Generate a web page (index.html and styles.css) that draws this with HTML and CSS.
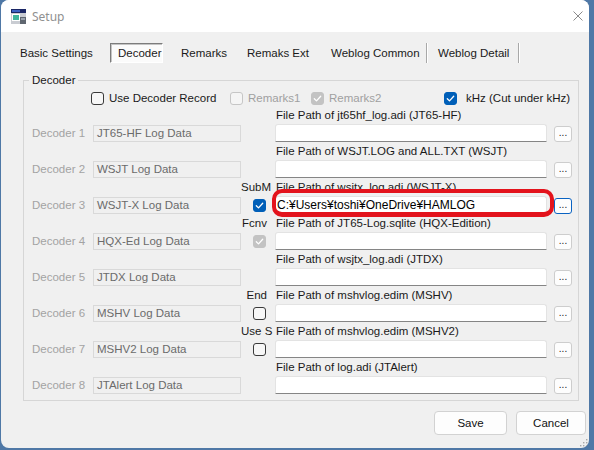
FILE: index.html
```html
<!DOCTYPE html>
<html>
<head>
<meta charset="utf-8">
<link rel="stylesheet" href="styles.css">
</head>
<body>
<div class="window">
  <div class="titlebar">
    <svg class="appicon" viewBox="0 0 15 15">
      <rect x="0" y="0" width="15" height="15" fill="#c9ccd2"/>
      <rect x="0" y="0" width="15" height="4" fill="#1b2766"/>
      <rect x="1" y="1" width="8" height="2" fill="#3b62c4"/>
      <rect x="1" y="5" width="8" height="7" fill="#ffffff"/>
      <rect x="2" y="6" width="6" height="5" fill="#3fb59c"/>
      <rect x="9" y="8" width="6" height="7" fill="#5f6670"/>
      <rect x="10" y="9" width="4" height="2" fill="#9aa2ad"/>
    </svg>
    <span class="title">Setup</span>
    <svg class="close" viewBox="0 0 10 10"><path d="M0.5 0.5 L9.5 9.5 M9.5 0.5 L0.5 9.5" stroke="#8a8a8a" stroke-width="1" fill="none"/></svg>
  </div>

  <div class="tabs">
    <span class="tab t1">Basic Settings</span>
    <span class="tab t2">Decoder</span>
    <span class="tab t3">Remarks</span>
    <span class="tab t4">Remaks Ext</span>
    <span class="tab t5">Weblog Common</span>
    <span class="sep"></span>
    <span class="tab t6">Weblog Detail</span>
    <span class="sep"></span>
  </div>

  <fieldset class="group">
    <legend>Decoder</legend>
    <div class="opts">
      <label class="opt o1"><span class="cb"></span>Use Decoder Record</label>
      <label class="opt o2 disabled"><span class="cb cb-dis"></span>Remarks1</label>
      <label class="opt o3 disabled"><span class="cb cb-dischk"><svg viewBox="0 0 13 13"><polyline points="3.3,6.7 5.5,8.9 9.7,4.3"/></svg></span>Remarks2</label>
      <label class="opt o4"><span class="cb cb-chk"><svg viewBox="0 0 13 13"><polyline points="3.3,6.7 5.5,8.9 9.7,4.3"/></svg></span>kHz (Cut under kHz)</label>
    </div>

    <div class="rows">
      <div class="row">
        <span class="flabel">File Path of jt65hf_log.adi (JT65-HF)</span>
        <span class="dname">Decoder 1</span>
        <span class="dbox">JT65-HF Log Data</span>
        <span class="path"></span>
        <span class="browse">...</span>
      </div>
      <div class="row">
        <span class="flabel">File Path of WSJT.LOG and ALL.TXT (WSJT)</span>
        <span class="dname">Decoder 2</span>
        <span class="dbox">WSJT Log Data</span>
        <span class="path"></span>
        <span class="browse">...</span>
      </div>
      <div class="row">
        <span class="mlabel">SubM</span>
        <span class="flabel">File Path of wsjtx_log.adi (WSJT-X)</span>
        <span class="dname">Decoder 3</span>
        <span class="dbox">WSJT-X Log Data</span>
        <span class="mcheck cb cb-chk"><svg viewBox="0 0 13 13"><polyline points="3.3,6.7 5.5,8.9 9.7,4.3"/></svg></span>
        <span class="path filled">C:¥Users¥toshi¥OneDrive¥HAMLOG</span>
        <span class="browse focus">...</span>
      </div>
      <div class="row">
        <span class="mlabel">Fcnv</span>
        <span class="flabel">File Path of JT65-Log.sqlite (HQX-Edition)</span>
        <span class="dname">Decoder 4</span>
        <span class="dbox">HQX-Ed Log Data</span>
        <span class="mcheck cb cb-dischk"><svg viewBox="0 0 13 13"><polyline points="3.3,6.7 5.5,8.9 9.7,4.3"/></svg></span>
        <span class="path"></span>
        <span class="browse">...</span>
      </div>
      <div class="row">
        <span class="flabel">File Path of wsjtx_log.adi (JTDX)</span>
        <span class="dname">Decoder 5</span>
        <span class="dbox">JTDX Log Data</span>
        <span class="path"></span>
        <span class="browse">...</span>
      </div>
      <div class="row">
        <span class="mlabel">End</span>
        <span class="flabel">File Path of mshvlog.edim (MSHV)</span>
        <span class="dname">Decoder 6</span>
        <span class="dbox">MSHV Log Data</span>
        <span class="mcheck cb"></span>
        <span class="path"></span>
        <span class="browse">...</span>
      </div>
      <div class="row">
        <span class="mlabel">Use S</span>
        <span class="flabel">File Path of mshvlog.edim (MSHV2)</span>
        <span class="dname">Decoder 7</span>
        <span class="dbox">MSHV2 Log Data</span>
        <span class="mcheck cb"></span>
        <span class="path"></span>
        <span class="browse">...</span>
      </div>
      <div class="row">
        <span class="flabel">File Path of log.adi (JTAlert)</span>
        <span class="dname">Decoder 8</span>
        <span class="dbox">JTAlert Log Data</span>
        <span class="path"></span>
        <span class="browse">...</span>
      </div>
      <div class="highlight"></div>
    </div>
  </fieldset>

  <div class="footer">
    <button class="btn save">Save</button>
    <button class="btn cancel">Cancel</button>
  </div>

  <svg class="grip" viewBox="0 0 8 8">
    <rect x="6" y="0" width="1.4" height="1.4" fill="#a8a8a8"/>
    <rect x="3" y="3" width="1.4" height="1.4" fill="#a8a8a8"/>
    <rect x="6" y="3" width="1.4" height="1.4" fill="#a8a8a8"/>
    <rect x="0" y="6" width="1.4" height="1.4" fill="#a8a8a8"/>
    <rect x="3" y="6" width="1.4" height="1.4" fill="#a8a8a8"/>
    <rect x="6" y="6" width="1.4" height="1.4" fill="#a8a8a8"/>
  </svg>
</div>
</body>
</html>
```

FILE: styles.css
```css
* { box-sizing: border-box; }

body {
  margin: 0;
  background: #4f78a6;
  font-family: "Liberation Sans", Arial, sans-serif;
  font-size: 11.5px;
  color: #1a1a1a;
}

.window {
  margin-left: 1px;
  width: 588px;
  height: 448px;
  background: #f0f0f0;
  border-radius: 8px;
  overflow: hidden;
  position: relative;
  display: flex;
  flex-direction: column;
}

.titlebar {
  flex: none;
  height: 32px;
  background: #ffffff;
  display: flex;
  align-items: center;
  padding-left: 10px;
}

.appicon { width: 15px; height: 15px; flex: none; }

.title {
  margin-left: 6px;
  color: #909090;
  font-family: "Noto Sans", sans-serif;
  font-size: 12px;
}

.close {
  width: 10px;
  height: 10px;
  margin-left: auto;
  margin-right: 6px;
}

.tabs {
  flex: none;
  display: flex;
  align-items: stretch;
  height: 20px;
  margin-top: 11px;
  padding-left: 19px;
}

.tab {
  display: flex;
  align-items: center;
  line-height: 14px;
  white-space: nowrap;
}

.t1 { width: 90px; }
.t2 {
  width: 53px;
  margin-right: 18px;
  padding-left: 7px;
  border: 1px solid;
  border-color: #7c7c7c #ffffff #ffffff #7c7c7c;
  box-shadow: inset 1px 1px 0 #c4c4c4;
  background: #fbfbfb;
}
.t3 { width: 66px; }
.t4 { width: 84px; }
.t5 { width: 95px; }
.t6 { width: 80px; margin-left: 10px; }

.sep {
  width: 2px;
  border-left: 1px solid #a8a8a8;
  border-right: 1px solid #ffffff;
}

.group {
  flex: none;
  margin: 10px 0 0 22px;
  width: 556px;
  padding: 4px 0 6px 8px;
  border: 1px solid #d6d6d6;
  min-width: 0;
}

.group legend {
  padding: 0 3px;
  margin-left: -3px;
  line-height: 14px;
}

.opts {
  display: flex;
  align-items: center;
  height: 14px;
  margin-bottom: 1px;
}

.opt {
  display: flex;
  align-items: center;
  gap: 5px;
  white-space: nowrap;
}

.o1 { margin-left: 59px; width: 139px; }
.o2 { width: 81px; }
.o3 { width: 133px; }
.o4 { gap: 9px; }
.disabled { color: #a0a0a0; }

.cb {
  flex: none;
  width: 13px;
  height: 13px;
  border: 1px solid #3a3a3a;
  border-radius: 3px;
  background: #f7f7f7;
  display: inline-block;
  position: relative;
}

.cb svg {
  position: absolute;
  left: -1px;
  top: -1px;
  width: 13px;
  height: 13px;
}

.cb polyline {
  fill: none;
  stroke: #ffffff;
  stroke-width: 1.3;
  stroke-linecap: round;
  stroke-linejoin: round;
}

.cb-dis { border-color: #c6c6c6; background: #f5f5f5; }
.cb-chk { border-color: #005fb8; background: #005fb8; }
.cb-dischk { border-color: #c3c3c3; background: #c3c3c3; }

.rows { position: relative; }

.row {
  display: grid;
  grid-template-columns: 61px 148px 34px 272px 7px 18px;
  grid-template-rows: 18px 18px;
}

.mlabel {
  grid-row: 1;
  grid-column: 3;
  text-align: right;
  padding-right: 8px;
  line-height: 18px;
  white-space: nowrap;
}

.flabel {
  grid-row: 1;
  grid-column: 4 / 7;
  padding-left: 1px;
  line-height: 18px;
  white-space: nowrap;
}

.dname {
  grid-row: 2;
  grid-column: 1;
  color: #a3a3a3;
  line-height: 18px;
}

.dbox {
  grid-row: 2;
  grid-column: 2;
  margin-top: 1px;
  border: 1px solid #d9d9d9;
  background: #f0f0f0;
  color: #6b6b6b;
  padding-left: 3px;
  line-height: 15px;
  white-space: nowrap;
}

.mcheck {
  grid-row: 2;
  grid-column: 3;
  align-self: center;
  justify-self: end;
  margin-right: 9px;
}

.path {
  grid-row: 2;
  grid-column: 4;
  background: #ffffff;
  border: 1px solid #e3e3e3;
  border-bottom: 1px solid #858585;
  border-radius: 3px 3px 0 0;
  padding-left: 1px;
  line-height: 16px;
  font-size: 12px;
  color: #000000;
  white-space: nowrap;
}

.browse {
  grid-row: 2;
  grid-column: 6;
  align-self: end;
  height: 16px;
  background: #fdfdfd;
  border: 1px solid #cdcdcd;
  border-radius: 3px;
  font-size: 10px;
  line-height: 12px;
  text-align: center;
  color: #222;
}

.browse.focus { border-color: #0a63c2; }

.highlight {
  position: absolute;
  left: 240px;
  top: 83px;
  width: 282px;
  height: 28px;
  border: 4px solid #e3131c;
  border-bottom-width: 5px;
  border-radius: 10px;
  pointer-events: none;
}

.footer {
  flex: none;
  display: flex;
  justify-content: flex-end;
  gap: 9px;
  margin-top: 10px;
  padding-right: 3px;
}

.btn {
  height: 24px;
  background: #fdfdfd;
  border: 1px solid #d2d2d2;
  border-radius: 4px;
  font-family: "Liberation Sans", Arial, sans-serif;
  font-size: 11.5px;
  color: #111;
  padding: 0;
}

.save { width: 73px; }
.cancel { width: 70px; }

.grip {
  position: absolute;
  right: 1px;
  bottom: 1px;
  width: 8px;
  height: 8px;
}
```
